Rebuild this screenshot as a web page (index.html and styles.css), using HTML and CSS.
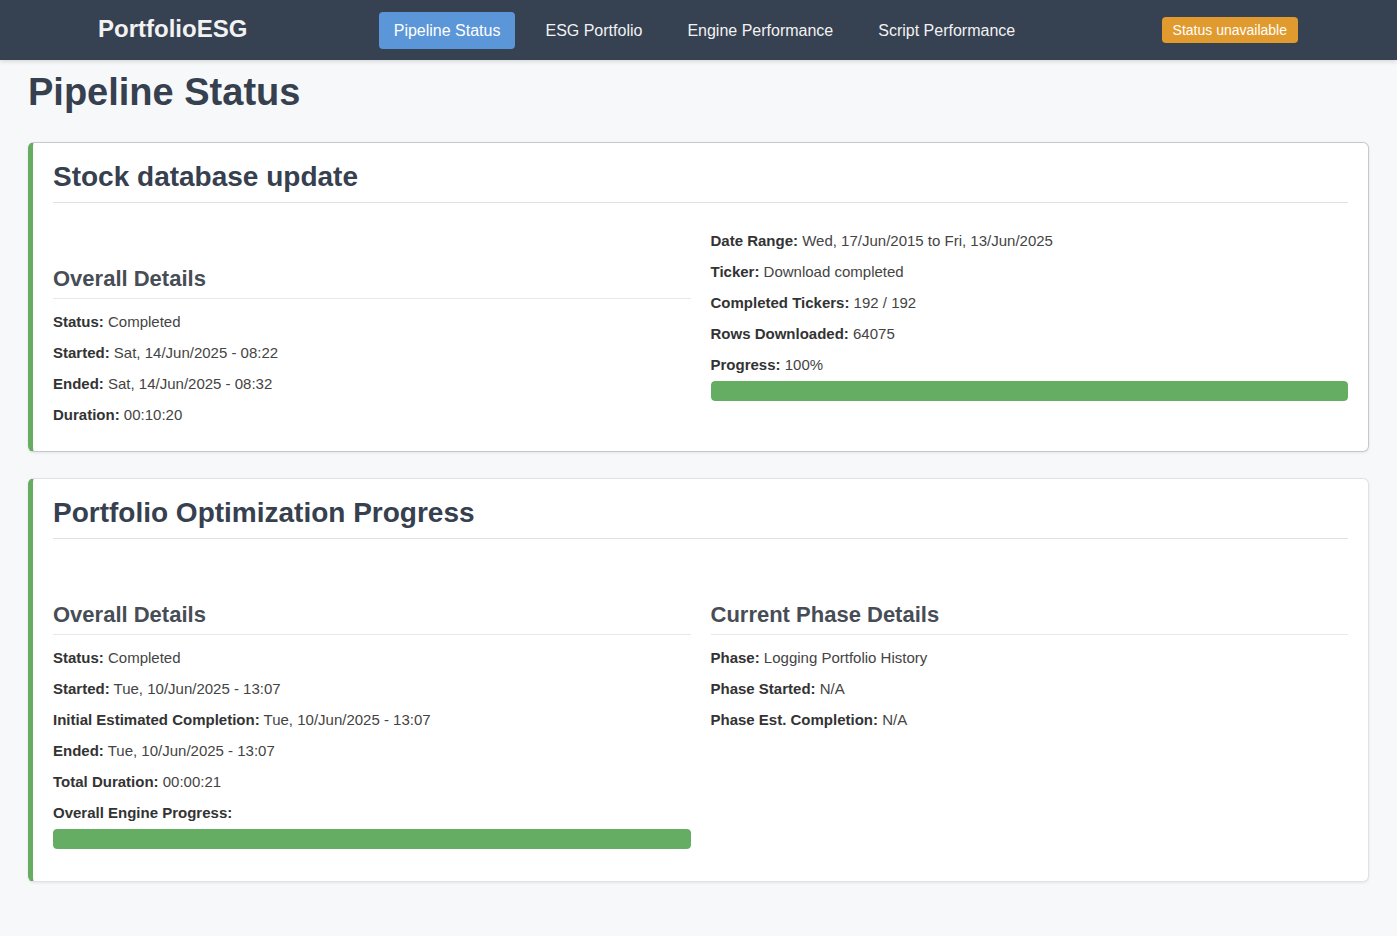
FILE: index.html
```html
<!DOCTYPE html>
<html lang="en">
<head>
<meta charset="utf-8">
<title>PortfolioESG - Pipeline Status</title>
<link rel="stylesheet" href="styles.css">
</head>
<body>
<header class="navbar">
  <div class="brand">PortfolioESG</div>
  <nav class="nav-links">
    <a class="nav-link active" href="#">Pipeline Status</a>
    <a class="nav-link" href="#">ESG Portfolio</a>
    <a class="nav-link" href="#">Engine Performance</a>
    <a class="nav-link" href="#">Script Performance</a>
  </nav>
  <span class="status-badge">Status unavailable</span>
</header>

<main class="page">
  <h1 class="page-title">Pipeline Status</h1>

  <section class="card card-focus">
    <h2 class="card-title">Stock database update</h2>
    <div class="card-grid">
      <div class="col">
        <h3 class="col-title">Overall Details</h3>
        <p class="row"><strong>Status:</strong> Completed</p>
        <p class="row"><strong>Started:</strong> Sat, 14/Jun/2025 - 08:22</p>
        <p class="row"><strong>Ended:</strong> Sat, 14/Jun/2025 - 08:32</p>
        <p class="row"><strong>Duration:</strong> 00:10:20</p>
      </div>
      <div class="col">
        <p class="row"><strong>Date Range:</strong> Wed, 17/Jun/2015 to Fri, 13/Jun/2025</p>
        <p class="row"><strong>Ticker:</strong> Download completed</p>
        <p class="row"><strong>Completed Tickers:</strong> 192 / 192</p>
        <p class="row"><strong>Rows Downloaded:</strong> 64075</p>
        <p class="row row-label"><strong>Progress:</strong> 100%</p>
        <div class="progress"><div class="progress-fill" style="width:100%"></div></div>
      </div>
    </div>
  </section>

  <section class="card">
    <h2 class="card-title">Portfolio Optimization Progress</h2>
    <div class="card-grid">
      <div class="col">
        <h3 class="col-title">Overall Details</h3>
        <p class="row"><strong>Status:</strong> Completed</p>
        <p class="row"><strong>Started:</strong> Tue, 10/Jun/2025 - 13:07</p>
        <p class="row"><strong>Initial Estimated Completion:</strong> Tue, 10/Jun/2025 - 13:07</p>
        <p class="row"><strong>Ended:</strong> Tue, 10/Jun/2025 - 13:07</p>
        <p class="row"><strong>Total Duration:</strong> 00:00:21</p>
        <p class="row row-label"><strong>Overall Engine Progress:</strong></p>
        <div class="progress progress-last"><div class="progress-fill" style="width:100%"></div></div>
      </div>
      <div class="col">
        <h3 class="col-title">Current Phase Details</h3>
        <p class="row"><strong>Phase:</strong> Logging Portfolio History</p>
        <p class="row"><strong>Phase Started:</strong> N/A</p>
        <p class="row"><strong>Phase Est. Completion:</strong> N/A</p>
      </div>
    </div>
  </section>
</main>
</body>
</html>
```

FILE: styles.css
```css
* {
  box-sizing: border-box;
}

html, body {
  margin: 0;
  padding: 0;
}

body {
  background: #f7f8fa;
  font-family: "Liberation Sans", Arial, Helvetica, sans-serif;
  color: #333;
}

.navbar {
  height: 60px;
  background: #364152;
  display: flex;
  align-items: center;
  justify-content: space-between;
  padding: 0 99px 0 98px;
  box-shadow: 0 2px 4px rgba(0, 0, 0, 0.12);
}

.brand {
  color: #f2f2f2;
  font-size: 24px;
  font-weight: 700;
  margin-top: -2px;
}

.nav-links {
  display: flex;
  gap: 15px;
  align-items: center;
}

.nav-link {
  color: #f2f2f2;
  text-decoration: none;
  font-size: 16px;
  line-height: 19px;
  padding: 9px 15px;
  border-radius: 4px;
}

.nav-link.active {
  background: #5b96d8;
  color: #ffffff;
}

.status-badge {
  background: #e09a2e;
  color: #ffffff;
  font-size: 14px;
  line-height: 16px;
  padding: 5px 11px;
  border-radius: 4px;
}

.page {
  padding: 0 28px 40px 28px;
}

.page-title {
  margin: 11px 0 28px 0;
  font-size: 38px;
  font-weight: 700;
  color: #36404f;
}

.card {
  background: #ffffff;
  border: 1px solid #e0e3e6;
  border-left: 5px solid #66ad62;
  border-radius: 6px;
  box-shadow: 0 1px 3px rgba(0, 0, 0, 0.08);
  padding: 18px 20px 16px 20px;
  margin-bottom: 26px;
}

.card.card-focus {
  border-color: #c4c9cf;
  border-left-color: #66ad62;
}

.card-title {
  margin: 0;
  font-size: 28px;
  font-weight: 700;
  color: #36404f;
  padding-bottom: 9px;
  border-bottom: 1px solid #dfe2e5;
}

.card-grid {
  display: grid;
  grid-template-columns: 1fr 1fr;
  column-gap: 20px;
  margin-top: 17px;
  align-items: start;
}

.col-title {
  margin: 46px 0 12px 0;
  font-size: 22px;
  font-weight: 700;
  color: #474d56;
  padding-bottom: 6px;
  border-bottom: 1px solid #e6e8eb;
}

.row {
  margin: 10px 0;
  font-size: 15px;
  line-height: 21px;
  color: #444;
}

.row strong {
  color: #333;
  font-weight: 700;
}

.row.row-label {
  margin-bottom: 6px;
}

.progress {
  height: 20px;
  background: #e9ecef;
  border-radius: 4px;
  overflow: hidden;
}

.progress-last {
  margin-bottom: 16px;
}

.progress-fill {
  height: 100%;
  background: #66ad64;
  border-radius: 4px;
}
```
